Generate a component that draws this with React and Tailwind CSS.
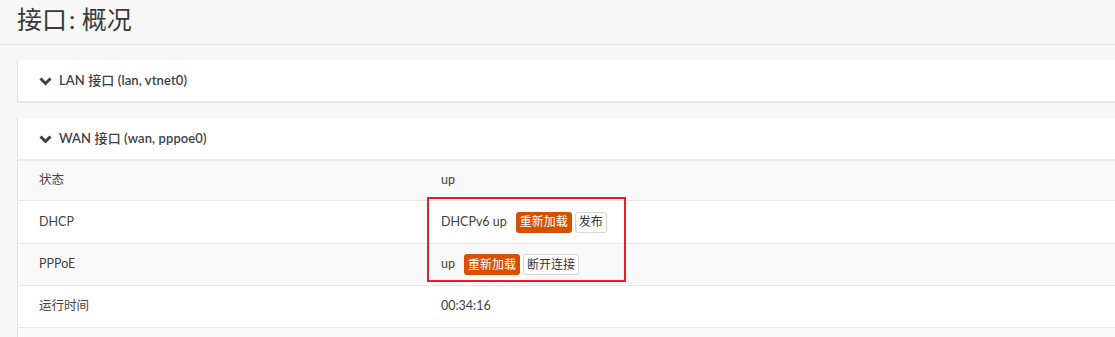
import React from "react";

const font = { fontFamily: '"Lato", "Noto Sans CJK SC", sans-serif' };

function Chevron() {
  return (
    <svg width="13" height="10" viewBox="0 0 13 10" className="shrink-0">
      <path d="M1.5 2.5 L6.5 7.5 L11.5 2.5" fill="none" stroke="#3c3f45" strokeWidth="3" strokeLinejoin="miter" />
    </svg>
  );
}

function PanelHeader({ name, detail }) {
  return (
    <div className="h-[41px] flex items-center gap-[7px] pl-[21px] text-[13px] font-semibold text-[#3c3f45]">
      <Chevron />
      <span className="tracking-[0.1px]">
        {name} <span className="font-medium">接口</span> {detail}
      </span>
    </div>
  );
}

function Row({ label, children, striped, h = "h-[41px]" }) {
  return (
    <div className={`${h} flex items-center border-b border-[#e8e8e8] text-[12.5px] ${striped ? "bg-[#f9f9f9]" : "bg-white"}`}>
      <div className="w-[423px] pl-[21px] text-[#454545]">{label}</div>
      <div className="flex items-center text-[#3d4048]">{children}</div>
    </div>
  );
}

function OrangeBtn({ children }) {
  return <span className="inline-flex items-center h-[21px] px-[4px] rounded-[3px] bg-[#d94f00] text-white text-[12px]">{children}</span>;
}

function WhiteBtn({ children }) {
  return <span className="inline-flex items-center h-[21px] px-[3px] rounded-[3px] bg-white border border-[#d6d6d6] text-[#333] text-[12px]">{children}</span>;
}

export default function App() {
  return (
    <div style={font} className="w-[1115px] h-[337px] bg-[#f7f7f7] overflow-hidden relative">
      <div className="h-[45px] flex items-start pt-[3px] pl-[17px] border-b border-[#e6e6e6] bg-[#f7f7f7]">
        <h1 className="text-[25px] leading-[32px] text-[#3a3a3a] font-normal">
          接口<span className="ml-[2px]">:</span> 概况
        </h1>
      </div>
      <div className="pl-[17px] pt-[15px]">
        <div className="bg-white border-l border-[#e3e3e3] border-b-2 border-b-[#e6e6e6]">
          <PanelHeader name="LAN" detail="(lan, vtnet0)" />
        </div>
        <div className="mt-[15px] bg-white border-l border-[#e3e3e3]">
          <div className="border-b-2 border-[#ececec]">
            <PanelHeader name="WAN" detail="(wan, pppoe0)" />
          </div>
          <Row label="状态" striped h="h-[40px]">up</Row>
          <Row label="DHCP" h="h-[43px]">
            <span className="mr-[9px]">DHCPv6 up</span>
            <OrangeBtn>重新加载</OrangeBtn>
            <span className="w-[3px]" />
            <WhiteBtn>发布</WhiteBtn>
          </Row>
          <Row label="PPPoE" striped h="h-[42px]">
            <span className="mr-[9px]">up</span>
            <OrangeBtn>重新加载</OrangeBtn>
            <span className="w-[3px]" />
            <WhiteBtn>断开连接</WhiteBtn>
          </Row>
          <Row label="运行时间" h="h-[42px]">00:34:16</Row>
          <Row label="" striped>{""}</Row>
        </div>
      </div>
      <div className="absolute left-[427px] top-[197px] w-[199px] h-[85px] border-2 border-[#e3202a] pointer-events-none" />
    </div>
  );
}
